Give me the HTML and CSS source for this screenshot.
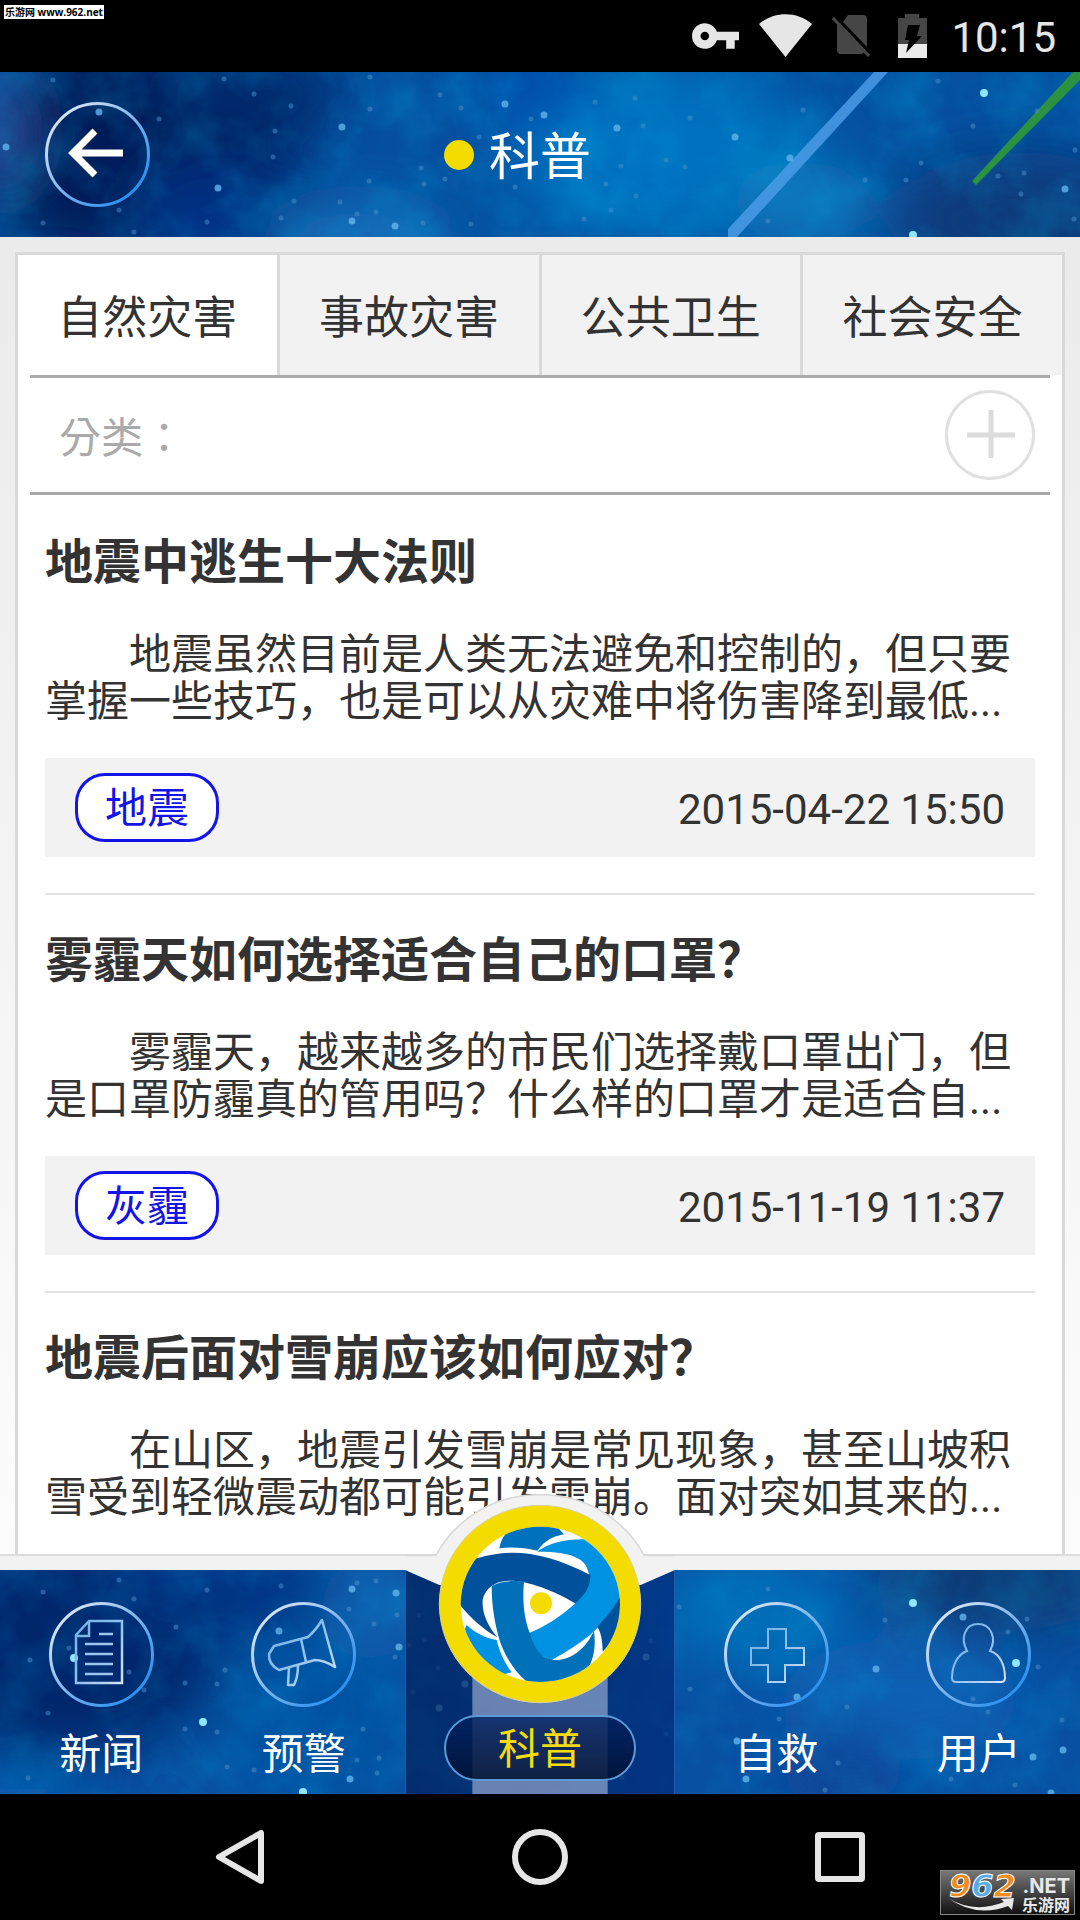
FILE: index.html
```html
<!DOCTYPE html>
<html lang="zh-CN">
<head>
    <meta charset="UTF-8">
    <meta name="viewport" content="width=device-width, initial-scale=1">
    <title>科普</title>
    <link rel="stylesheet" href="styles.css">
</head>
<body>
    <!-- 公用渐变和滤镜 -->
    <svg class="defs" aria-hidden="true">
        <defs>
            <linearGradient id="ring" x1="0" y1="0" x2="1" y2="1">
                <stop offset="0.1" stop-color="#dce8fa"/>
                <stop offset="0.5" stop-color="#7fb4ec"/>
                <stop offset="0.85" stop-color="#2e92f0"/>
            </linearGradient>
            <linearGradient id="glyph" x1="0" y1="0" x2="1" y2="1">
                <stop offset="0" stop-color="#6fb0ea"/>
                <stop offset="0.5" stop-color="#8fc0ee"/>
                <stop offset="1" stop-color="#d5e2f6"/>
            </linearGradient>
            <filter id="soft" x="-50%" y="-50%" width="200%" height="200%">
                <feGaussianBlur stdDeviation="28"/>
            </filter>
            <filter id="dust" x="0" y="0" width="100%" height="100%">
                <feTurbulence type="fractalNoise" baseFrequency="0.018" numOctaves="4" seed="7"/>
                <feColorMatrix values="0 0 0 0 0  0 0 0 0 0.45  0 0 0 0 0.8  2 0 0 0 -0.8"/>
            </filter>
        </defs>
    </svg>

    <div class="status-bar">
        <span class="site-tag">乐游网 www.962.net</span>
        <svg width="47" height="26" viewBox="1 6 22 12" fill="#e6e6e6"><path d="M12.65 10C11.83 7.67 9.61 6 7 6c-3.31 0-6 2.69-6 6s2.69 6 6 6c2.61 0 4.83-1.67 5.65-4H17v4h4v-4h2v-4H12.65zM7 14c-1.1 0-2-.9-2-2s.9-2 2-2 2 .9 2 2-.9 2-2 2z"/></svg>
        <svg width="53" height="44" viewBox="0 0 53 44" fill="#e6e6e6"><path d="M0 10C15-3 38-3 53 10L26.5 43z"/></svg>
        <svg width="38" height="42" viewBox="0 0 38 42"><path d="M16 0h15q4 0 4 4v28L11 7zM5 9L32 37Q31 39 29 39H9q-4 0-4-4z" fill="#464646"/><path d="M1 3L37 41" stroke="#464646" stroke-width="3"/></svg>
        <svg width="41" height="44" viewBox="0 0 41 44"><path d="M8 4h7V0h14v4h8v26H8z" fill="#464646"/><path d="M8 30h29v14H8z" fill="#ebebeb"/><path d="M18 11h12l-3 11h5L16 39l3-13h-4z" fill="#000"/></svg>
        <time class="clock">10:15</time>
    </div>

    <header class="header">
        <svg class="sky" viewBox="0 0 1080 165" preserveAspectRatio="xMidYMid slice" aria-hidden="true">
            <rect width="1080" height="165" fill="#0550a0"/>
            <g filter="url(#soft)">
                <ellipse cx="130" cy="80" rx="170" ry="110" fill="#001c58"/>
                <ellipse cx="0" cy="60" rx="25" ry="60" fill="#2b55a4"/>
                <ellipse cx="250" cy="20" rx="100" ry="40" fill="#062c6c"/>
                <ellipse cx="220" cy="140" rx="90" ry="50" fill="#003083"/>
                <ellipse cx="660" cy="80" rx="150" ry="90" fill="#0571be"/>
                <ellipse cx="360" cy="170" rx="90" ry="30" fill="#1b76c0"/>
                <ellipse cx="530" cy="20" rx="60" ry="30" fill="#004bac"/>
                <ellipse cx="1020" cy="150" rx="130" ry="70" fill="#0d3a7a"/>
                <ellipse cx="800" cy="130" rx="70" ry="40" fill="#107bbd"/>
            </g>
            <rect width="1080" height="165" filter="url(#dust)" opacity="0.25"/>
            <path d="M874 0h14L737 165h-9v-8z" fill="#4b9be6" opacity="0.85"/>
            <path d="M1073 0h7v8L976 113l-4-4z" fill="#2a9240"/>
            <path class="star" d="M53 8h0M159 47h0M207 150h0M119 138h0M43 151h0M134 160h0M275 59h0M273 85h0M291 34h0M294 129h0M370 5h0M370 37h0M340 130h0M357 142h0M376 140h0M369 109h0M421 96h0M424 112h0M445 107h0M461 36h0M531 47h0M479 65h0M440 23h0M471 152h0M423 151h0M515 115h0M224 7h0M254 22h0M643 54h0M595 30h0M635 26h0M803 38h0M690 46h0M685 95h0M621 94h0M666 88h0M636 124h0M606 112h0M611 138h0M584 147h0M768 149h0M938 9h0M973 54h0M1037 39h0M921 91h0M865 108h0M906 108h0M1024 101h0M998 104h0M1075 78h0M1021 122h0M1074 147h0M281 146h0"/>
            <path class="star bright" d="M6 75h0M99 40h0M218 116h0M342 55h0M352 149h0M395 154h0M505 32h0M544 43h0M617 56h0M735 65h0M790 86h0M1065 117h0"/>
            <path class="star shine" d="M984 21h0M913 163h0"/>
        </svg>
        <button class="back" aria-label="返回">
            <svg width="105" height="105" viewBox="0 0 105 105" fill="none"><circle cx="52.5" cy="52.5" r="51" stroke="url(#ring)" stroke-width="3"/><path d="M78 51H28M50 29L28 51l22 22" stroke="#fff" stroke-width="7"/></svg>
        </button>
        <h1 class="header-title"><span class="dot"></span><span class="header-text">科普</span></h1>
    </header>

    <main class="content">
        <section class="card">
            <nav class="tabs">
                <button class="tab active">自然灾害</button>
                <button class="tab">事故灾害</button>
                <button class="tab">公共卫生</button>
                <button class="tab">社会安全</button>
            </nav>

            <div class="filter">
                <span class="filter-label" lang="zh-TW">分类：</span>
                <button class="add" aria-label="添加分类">
                    <svg width="90" height="90" viewBox="0 0 90 90" fill="none"><circle cx="45" cy="45" r="43.5" stroke="#e0e0e0" stroke-width="3"/><path d="M22 45h48M46 20v48" stroke="#dcdcdc" stroke-width="5"/></svg>
                </button>
            </div>

            <div class="list">
                <article class="item">
                    <h2>地震中逃生十大法则</h2>
                    <p>地震虽然目前是人类无法避免和控制的，但只要掌握一些技巧，也是可以从灾难中将伤害降到最低...</p>
                    <div class="meta">
                        <a class="tag" href="#">地震</a>
                        <time>2015-04-22 15:50</time>
                    </div>
                </article>
                <article class="item">
                    <h2>雾霾天如何选择适合自己的口罩？</h2>
                    <p>雾霾天，越来越多的市民们选择戴口罩出门，但是口罩防霾真的管用吗？什么样的口罩才是适合自...</p>
                    <div class="meta">
                        <a class="tag" href="#">灰霾</a>
                        <time>2015-11-19 11:37</time>
                    </div>
                </article>
                <article class="item">
                    <h2>地震后面对雪崩应该如何应对？</h2>
                    <p>在山区，地震引发雪崩是常见现象，甚至山坡积雪受到轻微震动都可能引发雪崩。面对突如其来的...</p>
                </article>
            </div>
        </section>
    </main>

    <footer class="footer">
        <svg class="sky" viewBox="0 0 1080 224" preserveAspectRatio="xMidYMid slice" aria-hidden="true">
            <rect width="1080" height="224" fill="#0850a2"/>
            <g filter="url(#soft)">
                <ellipse cx="70" cy="80" rx="150" ry="110" fill="#00266c"/>
                <ellipse cx="230" cy="20" rx="120" ry="40" fill="#003080"/>
                <ellipse cx="20" cy="224" rx="80" ry="20" fill="#0a60b4"/>
                <ellipse cx="310" cy="150" rx="90" ry="80" fill="#0552a2"/>
                <ellipse cx="370" cy="40" rx="50" ry="50" fill="#1060b0"/>
                <ellipse cx="750" cy="40" rx="100" ry="50" fill="#0570ba"/>
                <ellipse cx="1000" cy="10" rx="130" ry="50" fill="#0c3a74"/>
                <ellipse cx="900" cy="130" rx="120" ry="60" fill="#0b60b4"/>
                <ellipse cx="840" cy="200" rx="60" ry="40" fill="#0a4294"/>
            </g>
            <rect width="1080" height="224" filter="url(#dust)" opacity="0.2"/>
            <path class="star" d="M119 10h0M43 22h0M207 20h0M134 29h0M176 57h0M281 16h0M357 13h0M376 11h0M349 39h0M374 54h0M397 45h0M395 87h0M69 78h0M30 90h0M129 102h0M144 120h0M48 143h0M185 113h0M217 114h0M225 100h0M217 162h0M185 159h0M227 197h0M254 200h0M377 203h0M357 190h0M379 188h0M28 208h0M363 159h0M419 45h0M409 75h0M425 70h0M438 98h0M413 122h0M651 71h0M666 164h0M622 208h0M679 37h0M768 19h0M885 50h0M1027 49h0M1008 62h0M1038 97h0M690 119h0M779 149h0M847 137h0M988 142h0M973 129h0M838 193h0M825 220h0M951 209h0M1015 215h0M1062 150h0"/>
            <path class="star bright" d="M352 19h0M396 23h0M279 61h0M399 77h0M350 209h0M465 114h0M439 138h0M646 87h0M963 47h0M876 99h0M797 127h0M737 171h0M746 209h0M1033 187h0M1063 180h0M1051 223h0"/>
            <path class="star shine" d="M74 88h0M203 152h0M303 222h0M913 33h0M1016 93h0"/>
        </svg>

        <a class="nav-item" href="#">
            <svg width="105" height="105" viewBox="0 0 105 105" fill="none"><circle cx="52.5" cy="52.5" r="51" stroke="url(#ring)" stroke-width="3"/><path d="M40 19H73V81H27V33zL40 34H27" stroke="url(#glyph)" stroke-width="2.5"/><path d="M50 32h14M36 42h28M36 52h28M36 62h28M36 72h28" stroke="#9cc4ee" stroke-width="2.5"/></svg>
            <span class="nav-label">新闻</span>
        </a>
        <a class="nav-item" href="#">
            <svg width="105" height="105" viewBox="0 0 105 105" fill="none"><circle cx="52.5" cy="52.5" r="51" stroke="url(#ring)" stroke-width="3"/><path d="M23 44L57 35Q65 28 71 18L84 65Q73 58 64 58L28 68Q17 62 18 52zM50 37l5 23M38 65l-1 18h6q4-8 4-20" stroke="url(#glyph)" stroke-width="2.5" stroke-linejoin="round"/></svg>
            <span class="nav-label">预警</span>
        </a>
        <a class="nav-item hub" href="#">
            <svg class="hub-art" viewBox="15 42 810 900" aria-hidden="true">
                <defs>
                    <clipPath id="ball"><ellipse cx="421" cy="373" rx="239" ry="233"/></clipPath>
                    <linearGradient id="shade" x1="0" y1="0" x2="1" y2="0">
                        <stop offset="0" stop-color="#001850" stop-opacity="0.65"/>
                        <stop offset="0.5" stop-color="#001b5c" stop-opacity="0.6"/>
                        <stop offset="1" stop-color="#002474" stop-opacity="0.65"/>
                    </linearGradient>
                </defs>
                <path d="M15 270H825V942H15z" fill="url(#shade)"/>
                <path d="M16 270V942M824 270V942" stroke="#3f78bc" stroke-width="2"/>
                <path d="M217 580H623V942H217z" fill="#c5cdea" opacity="0.52"/>
                <path d="M15 226H108C170 110 290 44 420 44S670 110 732 226H825V270L722 315H118L15 270z" fill="#f2f2f2"/>
                <path d="M15 226H108C170 110 290 44 420 44S670 110 732 226H825" fill="none" stroke="#d9d9d9" stroke-width="5"/>
                <ellipse cx="420" cy="372" rx="302" ry="296" fill="#f5dc00" stroke="#d8d2a0" stroke-width="3"/>
                <g clip-path="url(#ball)">
                    <path d="M160 120H680V620H160z" fill="#fff"/>
                    <path d="M318 160Q400 120 475 145L492 163Q440 170 412 212Q350 198 298 205Q302 180 318 160z" fill="#0071bc"/>
                    <path d="M412 215C460 180 520 178 558 178L680 180V330Q640 400 570 465Q520 505 455 540Q390 520 386 460Q460 430 524 372L568 285L563 270C555 235 510 214 412 215z" fill="#0092e2"/>
                    <path d="M170 235H232C330 205 430 212 571 285C573 320 550 350 525 370C460 330 370 298 320 303C285 305 255 325 248 360C245 400 265 440 292 472C250 450 195 400 170 360z" fill="#00519c"/>
                    <path d="M275 318C310 300 350 302 372 306C366 370 374 420 390 460C405 515 430 538 465 540C520 540 560 500 582 452C588 500 582 535 562 570L500 620H400L378 603C340 570 310 520 297 475C285 430 275 380 275 318z" fill="#0071b9"/>
                    <path d="M670 355L660 460L608 515C608 480 602 455 592 440C620 412 640 385 658 355z" fill="#00519c"/>
                    <path d="M200 435C230 462 260 475 290 480C300 520 315 550 335 577L240 600L170 500z" fill="#0092e2"/>
                    <circle cx="423" cy="370" r="33" fill="#f5dc00"/>
                </g>
            </svg>
            <span class="hub-pill"><span class="nav-label">科普</span></span>
        </a>
        <a class="nav-item" href="#">
            <svg width="105" height="105" viewBox="0 0 105 105" fill="none"><circle cx="52.5" cy="52.5" r="51" stroke="url(#ring)" stroke-width="3"/><path d="M44 27H62V46H80V63H61V80H44V63H27V46H44z" stroke="url(#glyph)" stroke-width="2"/></svg>
            <span class="nav-label">自救</span>
        </a>
        <a class="nav-item" href="#">
            <svg width="105" height="105" viewBox="0 0 105 105" fill="none"><circle cx="52.5" cy="52.5" r="51" stroke="url(#ring)" stroke-width="3"/><path d="M41 49C34 36 39 22 52 22S71 36 64 49C74 52 79 63 79 76Q79 80 75 80H30Q26 80 26 76C26 63 32 52 41 49z" stroke="url(#glyph)" stroke-width="2"/></svg>
            <span class="nav-label">用户</span>
        </a>
    </footer>

    <div class="system-nav">
        <button aria-label="后退"><svg width="56" height="56" viewBox="0 0 56 56" fill="none"><path d="M49 4V52L7 28z" stroke="#e6e6e6" stroke-width="6" stroke-linejoin="round"/></svg></button>
        <button aria-label="主屏幕"><svg width="56" height="56" viewBox="0 0 56 56" fill="none"><circle cx="28" cy="28" r="25" stroke="#e6e6e6" stroke-width="6"/></svg></button>
        <button aria-label="最近任务"><svg width="56" height="56" viewBox="0 0 56 56" fill="none"><rect x="6" y="6" width="44" height="44" rx="1" stroke="#e6e6e6" stroke-width="6" stroke-linejoin="round"/></svg></button>
        <div class="watermark">
            <span class="mark-num"><b>9</b><b class="blue">6</b><b>2</b></span>
            <span class="mark-side"><span class="mark-net">.NET</span><span class="mark-cn">乐游网</span></span>
            <svg class="swoosh" viewBox="0 0 66 14" aria-hidden="true"><path d="M0 0Q26 16 56 4L53 1L66 0L64 12L60 8Q28 20 0 0z" fill="#e8e8e8"/></svg>
        </div>
    </div>
</body>
</html>
```
FILE: styles.css
```css
* {
    box-sizing: border-box;
}

body {
    margin: 0;
    height: 100vh;
    display: flex;
    flex-direction: column;
    background: linear-gradient(#ebebeb 12%, #fcfcfc 80%);
    color: #333;
    font-family: Roboto, "Noto Sans CJK SC", sans-serif;
    font-size: 42px;
    overflow: hidden;
}

h1, h2, p {
    margin: 0;
}

button {
    padding: 0;
    border: none;
    background: none;
    font: inherit;
    color: inherit;
    cursor: pointer;
}

a {
    color: inherit;
    text-decoration: none;
}

svg {
    display: block;
}

.defs {
    position: absolute;
    width: 0;
    height: 0;
}

/* 状态栏 */
.status-bar {
    position: relative;
    display: flex;
    align-items: center;
    justify-content: flex-end;
    gap: 20px;
    height: 72px;
    padding-right: 24px;
    background: #000;
    flex-shrink: 0;
}

.site-tag {
    position: absolute;
    left: 4px;
    top: 5px;
    padding: 0 1px;
    background: #fff;
    color: #000;
    font-family: "Open Sans", "Noto Sans CJK SC", sans-serif;
    font-size: 10px;
    font-weight: bold;
    line-height: 14px;
}

.clock {
    padding-top: 4px;
    color: #e6e6e6;
    line-height: 68px;
}

/* 顶部标题 */
.header {
    position: relative;
    display: grid;
    grid-template-columns: 1fr auto 1fr;
    align-items: center;
    height: 165px;
    padding: 0 45px;
    flex-shrink: 0;
}

.sky {
    position: absolute;
    left: 0;
    top: 0;
    width: 100%;
    height: 100%;
}

.star {
    fill: none;
    stroke: #4c90d0;
    stroke-width: 5;
    stroke-linecap: round;
    opacity: 0.5;
}

.bright {
    stroke: #62b4ee;
    stroke-width: 7;
    opacity: 0.8;
}

.shine {
    stroke: #8ee6ff;
    stroke-width: 8;
    opacity: 1;
}

.back {
    position: relative;
    justify-self: start;
}

.header-title {
    position: relative;
    display: flex;
    align-items: center;
    gap: 15px;
    padding-right: 45px;
    color: #fff;
    font-size: 51px;
    font-weight: normal;
    line-height: 72px;
}

.header-text {
    padding-top: 6px;
}

.dot {
    width: 30px;
    height: 30px;
    border-radius: 50%;
    background: #f5dc00;
}

/* 内容 */
.content {
    flex: 1;
    min-height: 0;
    display: flex;
    padding: 15px 15px 0;
}

.card {
    flex: 1;
    min-width: 0;
    border: 3px solid #d9d9d9;
    border-bottom: none;
    background: #fff;
    overflow: hidden;
}

.tabs {
    display: flex;
    height: 120px;
}

.tab {
    flex: 1;
    padding-bottom: 2px;
    background: #f2f2f2;
    font-size: 45px;
    border-right: 3px solid #d9d9d9;
}

.tab:last-child {
    border-right: none;
}

.tab.active {
    background: #fff;
}

.filter {
    display: flex;
    align-items: center;
    justify-content: space-between;
    height: 120px;
    margin: 0 12px;
    padding: 0 15px 0 29px;
    border-top: 3px solid #aaa;
    border-bottom: 3px solid #aaa;
}

.filter-label {
    color: #aaa;
    font-family: "Noto Sans CJK TC", sans-serif;
    line-height: 60px;
}

.list {
    padding: 2px 27px 0;
}

.item {
    padding: 38px 0 36px;
    border-bottom: 2px solid #e3e3e3;
}

.item h2 {
    font-size: 48px;
    line-height: 56px;
}

.item p {
    margin: 40px 0 33px;
    line-height: 47px;
    text-indent: 2em;
}

.meta {
    display: flex;
    align-items: center;
    justify-content: space-between;
    padding: 15px 30px;
    background: #f2f2f2;
}

.meta time {
    padding-top: 4px;
}

.tag {
    padding: 3px 27px 0;
    border: 3px solid #1414e6;
    border-radius: 30px;
    background: #fff;
    color: #1414e6;
    line-height: 60px;
}

/* 底部导航 */
.footer {
    position: relative;
    display: grid;
    grid-template-columns: 3fr 3fr 4fr 3fr 3fr;
    height: 224px;
    margin-top: 16px;
    color: #fff;
    flex-shrink: 0;
}

.footer::before {
    content: "";
    position: absolute;
    left: 0;
    right: 0;
    top: -16px;
    height: 16px;
    border-top: 2px solid #dcdcdc;
    background: #f2f2f2;
}

.nav-item {
    position: relative;
    display: flex;
    flex-direction: column;
    align-items: center;
    gap: 15px;
    padding-top: 32px;
}

.nav-label {
    padding-top: 4px;
    line-height: 58px;
}

.hub {
    justify-content: flex-end;
    padding: 0 0 13px;
}

.hub-art {
    position: absolute;
    left: 0;
    bottom: 0;
    width: 100%;
}

.hub-pill {
    position: relative;
    display: flex;
    padding: 0 52px;
    border: 2px solid #5a9ad6;
    border-radius: 33px;
    background: linear-gradient(rgba(0, 32, 96, 0.8), rgba(0, 16, 48, 0.85));
    color: #f2dc10;
}

/* 系统按键 */
.system-nav {
    position: relative;
    display: grid;
    grid-template-columns: repeat(3, 1fr);
    align-items: center;
    justify-items: center;
    height: 126px;
    padding: 0 90px;
    background: #000;
    flex-shrink: 0;
}

.watermark {
    position: absolute;
    right: 5px;
    bottom: 5px;
    display: flex;
    justify-content: space-between;
    width: 135px;
    height: 45px;
    padding: 0 4px 0 8px;
    border: 1px solid #888;
    background: linear-gradient(#777, #111);
}

.mark-num {
    font-family: "DejaVu Sans", sans-serif;
    font-size: 32px;
    font-style: italic;
    line-height: 30px;
    color: #f08c1e;
    -webkit-text-stroke: 1px #fff;
}

.mark-num .blue {
    color: #5aaae6;
}

.mark-side {
    display: flex;
    flex-direction: column;
    align-items: flex-end;
    color: #e8e8e8;
    font-weight: bold;
}

.mark-net {
    padding-top: 2px;
    font-family: Inter, sans-serif;
    font-size: 20px;
    line-height: 26px;
}

.mark-cn {
    font-size: 16px;
    line-height: 14px;
}

.swoosh {
    position: absolute;
    left: 7px;
    bottom: 2px;
    width: 66px;
}
```
